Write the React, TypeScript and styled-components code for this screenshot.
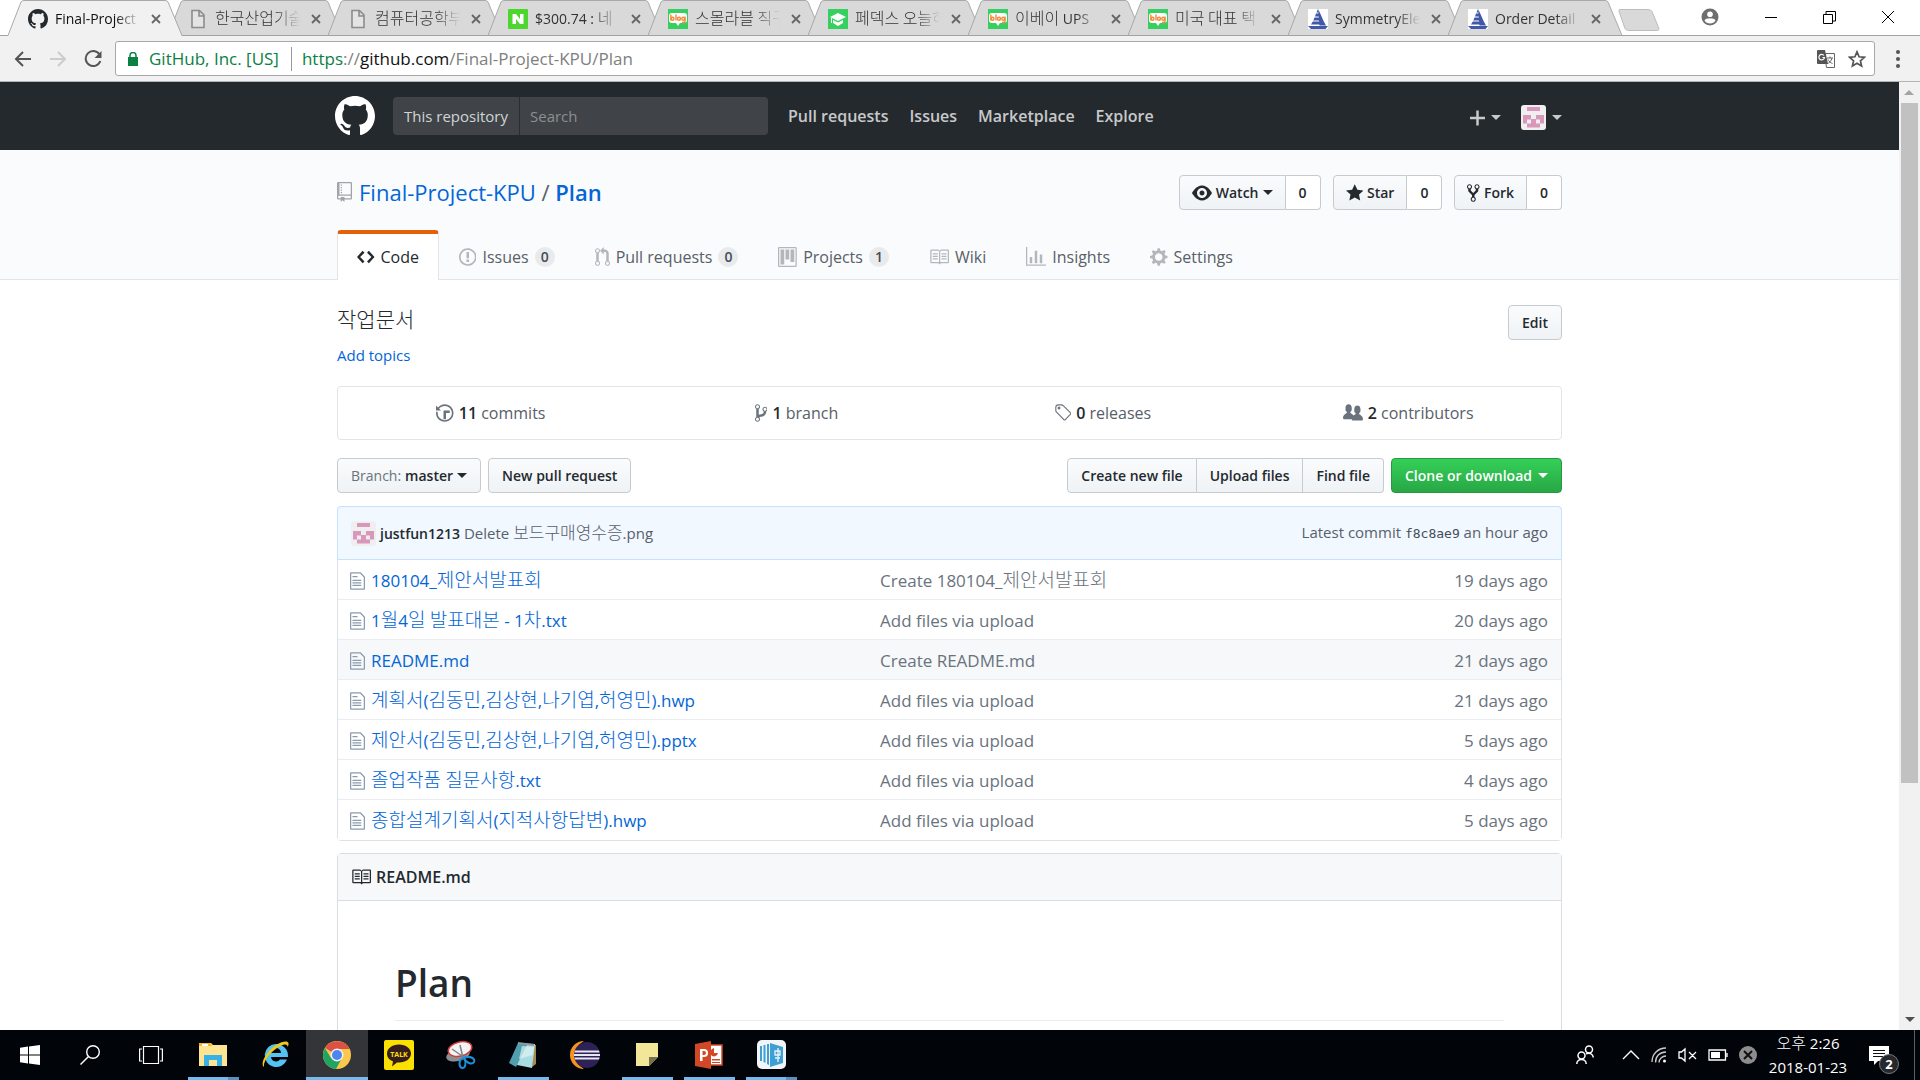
import React from "react";
import styled, { createGlobalStyle, css } from "styled-components";

const sans = `"Open Sans", "Noto Sans CJK KR", sans-serif`;

const GlobalStyle = createGlobalStyle`
  *, *::before, *::after { box-sizing: border-box; }
  body { margin: 0; background: #fff; color: #24292e; font: 16px/24px ${sans}; overflow: hidden; }
  button, input { font-family: inherit; margin: 0; }
  a { color: inherit; text-decoration: none; }
  svg { display: block; flex: none; }
  h1, h2, h3, p, ul { margin: 0; padding: 0; }
`;

/* ---------- text ---------- */

const Ko = styled.span<{ $size: number }>`
  font-family: "Noto Sans CJK KR", sans-serif;
  font-size: ${(p) => p.$size}px;
  font-weight: 300;
  line-height: 1;
`;

/* Sets the Hangul runs of a string in their own size. */
function Mixed({ text, size }: { text: string; size: number }) {
  return (
    <>
      {text.split(/([\uac00-\ud7a3]+)/).map((part, i) =>
        i % 2 ? <Ko key={i} $size={size}>{part}</Ko> : part
      )}
    </>
  );
}

/* ---------- octicons ---------- */

const octicons: Record<string, [number, string]> = {
  mark: [16, "M8 0C3.58 0 0 3.58 0 8c0 3.54 2.29 6.53 5.47 7.59.4.07.55-.17.55-.38 0-.19-.01-.82-.01-1.49-2.01.37-2.53-.49-2.69-.94-.09-.23-.48-.94-.82-1.13-.28-.15-.68-.52-.01-.53.63-.01 1.08.58 1.23.82.72 1.21 1.87.87 2.33.66.07-.52.28-.87.51-1.07-1.78-.2-3.64-.89-3.64-3.95 0-.87.31-1.59.82-2.15-.08-.2-.36-1.02.08-2.12 0 0 .67-.21 2.2.82.64-.18 1.32-.27 2-.27.68 0 1.36.09 2 .27 1.53-1.04 2.2-.82 2.2-.82.44 1.1.16 1.92.08 2.12.51.56.82 1.27.82 2.15 0 3.07-1.87 3.75-3.65 3.95.29.25.54.73.54 1.48 0 1.07-.01 1.93-.01 2.2 0 .21.15.46.55.38A8.013 8.013 0 0 0 16 8c0-4.42-3.58-8-8-8z"],
  repo: [12, "M4 9H3V8h1v1zm0-3H3v1h1V6zm0-2H3v1h1V4zm0-2H3v1h1V2zm8-1v12c0 .55-.45 1-1 1H6v2l-1.5-1.5L3 16v-2H1c-.55 0-1-.45-1-1V1c0-.55.45-1 1-1h10c.55 0 1 .45 1 1zm-1 10H1v2h2v-1h3v1h5v-2zm0-10H2v9h9V1z"],
  eye: [16, "M8.06 2C3 2 0 8 0 8s3 6 8.06 6C13 14 16 8 16 8s-3-6-7.94-6zM8 12c-2.2 0-4-1.78-4-4 0-2.2 1.8-4 4-4 2.22 0 4 1.8 4 4 0 2.22-1.78 4-4 4zm2-4c0 1.11-.89 2-2 2-1.11 0-2-.89-2-2 0-1.11.89-2 2-2 1.11 0 2 .89 2 2z"],
  star: [14, "M14 6l-4.9-.64L7 1 4.9 5.36 0 6l3.6 3.26L2.67 14 7 11.67 11.33 14l-.93-4.74z"],
  fork: [10, "M8 1a1.993 1.993 0 0 0-1 3.72V6L5 8 3 6V4.72A1.993 1.993 0 0 0 2 1a1.993 1.993 0 0 0-1 3.72V6.5l3 3v1.78A1.993 1.993 0 0 0 5 15a1.993 1.993 0 0 0 1-3.72V9.5l3-3V4.72A1.993 1.993 0 0 0 8 1zM2 4.2C1.34 4.2.8 3.65.8 3c0-.65.55-1.2 1.2-1.2.65 0 1.2.55 1.2 1.2 0 .65-.55 1.2-1.2 1.2zm3 10c-.66 0-1.2-.55-1.2-1.2 0-.65.55-1.2 1.2-1.2.65 0 1.2.55 1.2 1.2 0 .65-.55 1.2-1.2 1.2zm3-10c-.66 0-1.2-.55-1.2-1.2 0-.65.55-1.2 1.2-1.2.65 0 1.2.55 1.2 1.2 0 .65-.55 1.2-1.2 1.2z"],
  code: [14, "M9.5 3L8 4.5 11.5 8 8 11.5 9.5 13 14 8 9.5 3zm-5 0L0 8l4.5 5L6 11.5 2.5 8 6 4.5 4.5 3z"],
  issue: [14, "M7 2.3c3.14 0 5.7 2.56 5.7 5.7s-2.56 5.7-5.7 5.7A5.71 5.71 0 0 1 1.3 8c0-3.14 2.56-5.7 5.7-5.7zM7 1C3.14 1 0 4.14 0 8s3.14 7 7 7 7-3.14 7-7-3.14-7-7-7zm1 3H6v5h2V4zm0 6H6v2h2v-2z"],
  pull: [12, "M11 11.28V5c-.03-.78-.34-1.47-.94-2.06C9.46 2.35 8.78 2.03 8 2H7V0L4 3l3 3V4h1c.27.02.48.11.69.31.21.2.3.42.31.69v6.28A1.993 1.993 0 0 0 10 15a1.993 1.993 0 0 0 1-3.72zm-1 2.92c-.66 0-1.2-.55-1.2-1.2 0-.65.55-1.2 1.2-1.2.65 0 1.2.55 1.2 1.2 0 .65-.55 1.2-1.2 1.2zM4 3c0-1.11-.89-2-2-2a1.993 1.993 0 0 0-1 3.72v6.56A1.993 1.993 0 0 0 2 15a1.993 1.993 0 0 0 1-3.72V4.72c.59-.34 1-.98 1-1.72zm-.8 10c0 .66-.55 1.2-1.2 1.2-.65 0-1.2-.55-1.2-1.2 0-.65.55-1.2 1.2-1.2.65 0 1.2.55 1.2 1.2zM2 4.2C1.34 4.2.8 3.65.8 3c0-.65.55-1.2 1.2-1.2.65 0 1.2.55 1.2 1.2 0 .65-.55 1.2-1.2 1.2z"],
  project: [15, "M10 12h3V2h-3v10zm-4-2h3V2H6v8zm-4 4h3V2H2v12zm-1 1h13V1H1v14zM14 0H1a1 1 0 0 0-1 1v14a1 1 0 0 0 1 1h13a1 1 0 0 0 1-1V1a1 1 0 0 0-1-1z"],
  book: [16, "M3 5h4v1H3V5zm0 3h4V7H3v1zm0 2h4V9H3v1zm11-5h-4v1h4V5zm0 2h-4v1h4V7zm0 2h-4v1h4V9zm2-6v9c0 .55-.45 1-1 1H9.5l-1 1-1-1H2c-.55 0-1-.45-1-1V3c0-.55.45-1 1-1h5.5l1 1 1-1H15c.55 0 1 .45 1 1zm-8 .5L7.5 3H2v9h6V3.5zm7-.5H9.5l-.5.5V12h6V3z"],
  graph: [16, "M16 14v1H0V0h1v14h15zM5 13H3V8h2v5zm4 0H7V3h2v10zm4 0h-2V6h2v7z"],
  gear: [14, "M14 8.77v-1.6l-1.94-.64-.45-1.09.88-1.84-1.13-1.13-1.81.91-1.09-.45-.69-1.92h-1.6l-.63 1.94-1.11.45-1.84-.88-1.13 1.13.91 1.81-.45 1.09L0 7.23v1.59l1.94.64.45 1.09-.88 1.84 1.13 1.13 1.81-.91 1.09.45.69 1.92h1.59l.63-1.94 1.11-.45 1.84.88 1.13-1.13-.92-1.81.47-1.09L14 8.75v.02zM7 11c-1.66 0-3-1.34-3-3s1.34-3 3-3 3 1.34 3 3-1.34 3-3 3z"],
  history: [14, "M8 13H6V6h5v2H8v5zM7 1C4.81 1 2.87 2.02 1.59 3.59L0 2v4h4L2.5 4.5C3.55 3.17 5.17 2.3 7 2.3c3.14 0 5.7 2.56 5.7 5.7s-2.56 5.7-5.7 5.7A5.71 5.71 0 0 1 1.3 8c0-.34.03-.67.09-1H.08C.03 7.33 0 7.66 0 8c0 3.86 3.14 7 7 7s7-3.14 7-7-3.14-7-7-7z"],
  branch: [10, "M10 5c0-1.11-.89-2-2-2a1.993 1.993 0 0 0-1 3.72v.3c-.02.52-.23.98-.63 1.38-.4.4-.86.61-1.38.63-.83.02-1.48.16-2 .45V4.72a1.993 1.993 0 0 0-1-3.72C.88 1 0 1.89 0 3a2 2 0 0 0 1 1.72v6.56c-.59.35-1 .99-1 1.72 0 1.11.89 2 2 2 1.11 0 2-.89 2-2 0-.53-.2-1-.53-1.36.09-.06.48-.41.59-.47.25-.11.56-.17.94-.17 1.05-.05 1.95-.45 2.75-1.25S8.95 7.77 9 6.73h-.02C9.59 6.37 10 5.73 10 5zM2 1.8c.66 0 1.2.55 1.2 1.2 0 .65-.55 1.2-1.2 1.2C1.35 4.2.8 3.65.8 3c0-.65.55-1.2 1.2-1.2zm0 12.41c-.66 0-1.2-.55-1.2-1.2 0-.65.55-1.2 1.2-1.2.65 0 1.2.55 1.2 1.2 0 .65-.55 1.2-1.2 1.2zm6-8c-.66 0-1.2-.55-1.2-1.2 0-.65.55-1.2 1.2-1.2.65 0 1.2.55 1.2 1.2 0 .65-.55 1.2-1.2 1.2z"],
  tag: [14, "M7.685 1.72a2.49 2.49 0 0 0-1.76-.726H3.48A2.5 2.5 0 0 0 .994 3.48v2.456c0 .656.269 1.292.726 1.76l6.024 6.024a.99.99 0 0 0 1.402 0l4.563-4.563a.99.99 0 0 0 0-1.402L7.685 1.72zM2.366 7.048A1.54 1.54 0 0 1 1.9 5.925V3.48c0-.874.716-1.58 1.58-1.58h2.456c.418 0 .825.159 1.123.467l6.104 6.094-4.702 4.702-6.094-6.114zm.626-4.066h1.989v1.989H2.982V2.982h.01z"],
  people: [16, "M16 12.999c0 .439-.45 1-1 1H7.995c-.539 0-.994-.447-.995-.999H1c-.54 0-1-.561-1-1 0-2.634 3-4 3-4s.229-.409 0-1c-.841-.621-1.058-.59-1-3 .058-2.419 1.367-3 2.5-3s2.442.58 2.5 3c.058 2.41-.159 2.379-1 3-.229.59 0 1 0 1s1.549.711 2.42 2.088C9.196 9.369 10 8.999 10 8.999s.229-.409 0-1c-.841-.62-1.058-.59-1-3 .058-2.419 1.367-3 2.5-3s2.437.581 2.495 3c.059 2.41-.158 2.38-1 3-.229.59 0 1 0 1s3.005 1.366 3.005 4"],
  file: [12, "M6 5H2V4h4v1zM2 8h7V7H2v1zm0 2h7V9H2v1zm0 2h7v-1H2v1zm10-7.5V14c0 .55-.45 1-1 1H1c-.55 0-1-.45-1-1V2c0-.55.45-1 1-1h7.5L12 4.5zM11 5L8 2H1v12h10V5z"],
  plus: [12, "M12 9H7v5H5V9H0V7h5V2h2v5h5z"],
};

function Octicon({ name, size = 20 }: { name: string; size?: number }) {
  const [w, d] = octicons[name];
  return (
    <svg viewBox={`0 0 ${w} 16`} width={(w * size) / 16} height={size} fill="currentColor" aria-hidden="true">
      <path fillRule="evenodd" d={d} />
    </svg>
  );
}

const Caret = styled.i`
  flex: none;
  border: 5px solid transparent;
  border-top-color: currentColor;
  border-bottom: 0;
`;

function Avatar() {
  return (
    <svg width="25" height="25" viewBox="0 0 25 25" aria-hidden="true">
      <rect width="25" height="25" rx="3" fill="#f0eff0" />
      <path
        fill="#d997bb"
        fillRule="evenodd"
        d="M6 2h13v4H6zM2 10h8v4h5v-4h8v8.500h-4v4H6v-4H2zM6 14.500v4h4v-4zM15 14.500v4h4v-4z"
      />
    </svg>
  );
}

/* ---------- browser frame ---------- */

const Screen = styled.div`
  display: flex;
  flex-direction: column;
  height: 100vh;
`;

const TabStrip = styled.div`
  display: flex;
  height: 36px;
  flex: none;
  background: #fff;
  border-bottom: 1px solid #a2a2a2;
`;

const TabList = styled.div`
  display: flex;
  flex: 0 1 1608px;
  min-width: 0;
  padding-left: 8px;
`;

const Tab = styled.div<{ $active?: boolean }>`
  position: relative;
  display: flex;
  align-items: center;
  flex: 0 1 160px;
  min-width: 0;
  height: 36px;
  padding: 2px 2px 0 20px;
  z-index: ${(p) => (p.$active ? 2 : 1)};
`;

const TabShape = styled.svg`
  position: absolute;
  left: 0;
  top: 0;
  z-index: -1;
`;

const TabTitle = styled.a<{ $active?: boolean }>`
  flex: 1;
  min-width: 0;
  margin: 0 4px 0 7px;
  white-space: nowrap;
  font-size: 14px;
  line-height: 26px;
  color: ${(p) => (p.$active ? "#111" : "#333")};
  mask-image: linear-gradient(90deg, #000 70%, transparent 98%);
`;

const PlainButton = styled.button<{ $w?: number }>`
  display: flex;
  align-items: center;
  justify-content: center;
  flex: none;
  width: ${(p) => (p.$w ? `${p.$w}px` : "auto")};
  padding: 0;
  border: 0;
  background: none;
  color: inherit;
`;

const WindowControls = styled.div`
  display: flex;
  flex: none;
  height: 34px;
  margin-left: auto;
`;

const NewTab = styled(PlainButton)`
  height: 40px;
  margin-left: 10px;
`;

const Toolbar = styled.div`
  display: flex;
  align-items: center;
  flex: none;
  height: 46px;
  padding: 0 12px 0 6px;
  background: #f1f1f1;
  border-bottom: 1px solid #b4b4b4;
  color: #555;
`;

const Omnibox = styled.div`
  display: flex;
  align-items: center;
  flex: 1;
  min-width: 0;
  height: 35px;
  margin: 0 13px 0 5px;
  padding: 0 8px 0 12px;
  border: 1px solid #a8a8a8;
  border-radius: 3px;
  background: #fff;
  font-size: 17px;
  line-height: 24px;
  white-space: nowrap;
`;

const Secure = styled.span`
  margin-left: 11px;
  padding-right: 12px;
  border-right: 1px solid #999;
  color: #0b8043;
`;

const Url = styled.span`
  flex: 1;
  padding-left: 10px;
  color: #808080;
`;

const Scheme = styled.span` color: #0b8043; `;
const Domain = styled.span` color: #111; `;

const OmniActions = styled.div`
  display: flex;
  gap: 13px;
`;

/* ---------- page ---------- */

const Viewport = styled.div`
  display: flex;
  flex: 1;
  min-height: 0;
`;

const Page = styled.div`
  flex: 1;
  min-width: 0;
  overflow: hidden;
`;

const Scrollbar = styled.div`
  display: flex;
  flex-direction: column;
  align-items: center;
  justify-content: space-between;
  flex: none;
  width: 21px;
  background: #f1f1f1;
`;

const ScrollTrack = styled.div`
  flex: 1;
  width: 17px;
`;

const ScrollThumb = styled.div`
  height: 75%;
  background: #c1c1c1;
`;

const ScrollArrow = styled.button<{ $down?: boolean }>`
  display: flex;
  align-items: center;
  justify-content: center;
  width: 21px;
  height: 21px;
  padding: 0;
  border: 0;
  background: none;
  color: ${(p) => (p.$down ? "#505050" : "#a3a3a3")};
  transform: ${(p) => (p.$down ? "none" : "rotate(180deg)")};
`;

const Container = styled.div`
  width: 100%;
  max-width: 1225px;
  margin: 0 auto;
`;

const SiteHeader = styled.header`
  background: #24292e;
  color: rgba(255, 255, 255, 0.75);
`;

const HeaderRow = styled(Container)`
  display: flex;
  align-items: center;
  height: 68px;
`;

const Logo = styled.a`
  margin-left: -2px;
  color: #fff;
`;

const SearchForm = styled.form`
  display: flex;
  align-items: center;
  width: 375px;
  height: 38px;
  margin: 0 20px 0 18px;
  border-radius: 4px;
  background: #404448;
  font-size: 15px;
  line-height: 38px;
`;

const SearchScope = styled.label`
  padding: 0 11px;
  border-right: 1px solid #282e34;
  color: #d2d4d5;
  white-space: nowrap;
`;

const SearchInput = styled.input`
  flex: 1;
  min-width: 0;
  height: 38px;
  padding: 0 10px;
  border: 0;
  background: none;
  color: #fff;
  font-size: 15px;
  &::placeholder { color: #8c8f91; opacity: 1; }
`;

const SiteNav = styled.nav`
  display: flex;
  gap: 21px;
  font-weight: 600;
`;

const HeaderActions = styled.div`
  display: flex;
  gap: 20px;
  margin-left: auto;
  padding-top: 3px;
  button { gap: 6px; }
`;

const RepoHead = styled.div`
  background: #fafbfc;
  border-bottom: 1px solid #e1e4e8;
`;

const RepoTitleRow = styled(Container)`
  display: flex;
  align-items: center;
  height: 80px;
  padding-top: 5px;
`;

const RepoTitle = styled.h1`
  display: flex;
  align-items: center;
  gap: 7px;
  padding-bottom: 2px;
  color: #586069;
  font-size: 22px;
  font-weight: 400;
  line-height: 32px;
  svg { color: #a0a4a9; }
  a { color: #0366d6; }
  strong { font-weight: 600; }
`;

const SocialList = styled.ul`
  display: flex;
  gap: 12px;
  margin-left: auto;
  list-style: none;
  li { display: flex; }
`;

const buttonBase = css`
  display: flex;
  align-items: center;
  justify-content: center;
  height: 35px;
  padding: 0 13px;
  border: 1px solid #c8cbce;
  border-radius: 4px;
  background: linear-gradient(#fafbfc, #eff3f6);
  color: #24292e;
  font-size: 14px;
  font-weight: 600;
  line-height: 25px;
  white-space: nowrap;
`;

const Button = styled.button`
  ${buttonBase}
  gap: 4px;
`;

const SocialButton = styled(Button)`
  padding: 0 12px;
  border-radius: 4px 0 0 4px;
`;

const SocialCount = styled.a`
  ${buttonBase}
  min-width: 35px;
  padding: 0 12px;
  border-left: 0;
  border-radius: 0 4px 4px 0;
  background: #fff;
`;

const GreenButton = styled(Button)`
  gap: 6px;
  border-color: #2a9641;
  background: linear-gradient(#34d058, #28a745);
  color: #fff;
`;

const ButtonGroup = styled.div`
  display: flex;
  margin-left: auto;
  button { border-radius: 0; padding: 0 13px; }
  button + button { border-left: 0; }
  button:first-child { border-radius: 4px 0 0 4px; }
  button:last-child { border-radius: 0 4px 4px 0; }
`;

const RepoTabs = styled.nav`
  display: flex;
  width: 100%;
  max-width: 1225px;
  height: 50px;
  margin: 0 auto -1px;
`;

const RepoTab = styled.a<{ $active?: boolean }>`
  display: flex;
  align-items: center;
  gap: 6px;
  padding: 0 19px;
  border: 1px solid transparent;
  border-top: 4px solid transparent;
  border-bottom: 0;
  border-radius: 4px 4px 0 0;
  color: #586069;
  white-space: nowrap;
  svg { color: #b4b7ba; }
  ${(p) =>
    p.$active &&
    css`
      border-color: #e36209 #e1e4e8 transparent;
      background: #fff;
      color: #24292e;
      svg { color: #24292e; }
    `}
`;

const Counter = styled.span`
  min-width: 20px;
  padding: 0 6px;
  border-radius: 20px;
  background: #e8eaec;
  color: #444d56;
  font-size: 14px;
  font-weight: 600;
  line-height: 20px;
  text-align: center;
`;

const Main = styled(Container)`
  padding-top: 25px;
`;

const DescriptionRow = styled.div`
  display: flex;
  align-items: flex-start;
  justify-content: space-between;
`;

const About = styled.div`
  padding-top: 2px;
`;

const Description = styled.p`
  height: 36px;
  line-height: 28px;
`;

const TopicsLink = styled.a`
  display: block;
  color: #0366d6;
  font-size: 15px;
  line-height: 24px;
`;

const Stats = styled.ul`
  display: flex;
  height: 54px;
  margin: 19px 0 18px;
  border: 1px solid #e1e4e8;
  border-radius: 4px;
  list-style: none;
  li { flex: 1; display: flex; }
`;

const Stat = styled.a`
  display: flex;
  align-items: center;
  justify-content: center;
  flex: 1;
  gap: 5px;
  color: #586069;
  svg { color: #6a737d; }
  strong { color: #24292e; font-weight: 600; }
`;

const FileNav = styled.div`
  display: flex;
  gap: 7px;
  margin-bottom: 13px;
`;

const BranchLabel = styled.span`
  color: #6a737d;
  font-weight: 400;
`;

const FilesBox = styled.section`
  border: 1px solid #dfe2e5;
  border-radius: 4px;
`;

const CommitTease = styled.div`
  display: flex;
  align-items: center;
  gap: 4px;
  height: 54px;
  margin: -1px -1px 0;
  padding: 0 13px;
  border: 1px solid #c8e1ff;
  border-radius: 4px 4px 0 0;
  background: #f1f8ff;
  color: #586069;
  font-size: 15px;
  a { color: #24292e; font-size: 14px; font-weight: 600; }
`;

const CommitMeta = styled.span`
  margin-left: auto;
`;

const Sha = styled.code`
  color: #444d56;
  font-family: "DejaVu Sans Mono", monospace;
  font-size: 13px;
`;

const FileTable = styled.table`
  width: 100%;
  border-collapse: separate;
  border-spacing: 0;
  table-layout: fixed;
`;

const FileRow = styled.tr<{ $shaded?: boolean }>`
  background: ${(p) => (p.$shaded ? "#f6f8fa" : "#fff")};
  &:not(:last-child) td { border-bottom: 1px solid #eaecef; }
`;

const Cell = styled.td<{ $w?: string; $right?: boolean }>`
  width: ${(p) => p.$w || "auto"};
  height: 40px;
  padding: 2px 13px 0 0;
  color: #6a737d;
  text-align: ${(p) => (p.$right ? "right" : "left")};
  white-space: nowrap;
  font-size: 17px;
  line-height: 24px;
`;

const FileName = styled.div`
  display: flex;
  align-items: center;
  gap: 6px;
  padding-left: 12px;
  svg { color: #8a9bb0; }
  a { color: #0366d6; }
`;

const Readme = styled.article`
  margin-top: 12px;
  border: 1px solid #d9dce0;
  border-radius: 4px;
`;

const ReadmeHead = styled.h3`
  display: flex;
  align-items: center;
  gap: 5px;
  height: 47px;
  padding: 0 13px;
  border-bottom: 1px solid #d9dce0;
  background: #f6f8fa;
  font-size: 16px;
  font-weight: 600;
`;

const ReadmeBody = styled.div`
  padding: 57px;
  height: 300px;
  h1 {
    padding-bottom: 12px;
    border-bottom: 1px solid #eaecef;
    font-size: 37px;
    font-weight: 600;
    line-height: 50px;
  }
`;

/* ---------- taskbar ---------- */

const Taskbar = styled.footer`
  display: flex;
  flex: none;
  height: 50px;
  padding-right: 5px;
  background: #010409;
  color: #fff;
`;

const TaskButton = styled.button<{ $w: number; $running?: boolean; $stacked?: boolean; $current?: boolean }>`
  display: flex;
  align-items: center;
  justify-content: center;
  flex: none;
  width: ${(p) => p.$w}px;
  height: 50px;
  padding: 0;
  border: 0;
  background: ${(p) => (p.$current ? "#333539" : "none")};
  ${(p) =>
    p.$running &&
    css`
      background: linear-gradient(90deg, #76b9ed ${p.$stacked ? "40px" : "100%"}, #5a8fbf 0)
        ${p.$current ? "0 100% / 100%" : "6px 100% / 51px"} 3px no-repeat ${p.$current ? "#333539" : "transparent"};
    `}
`;

const Tray = styled.div`
  display: flex;
  align-items: center;
  margin-left: auto;
  border-right: 1px solid #5c5f63;
`;

const TrayIcons = styled.div`
  display: flex;
  align-items: center;
  gap: 11px;
  margin: 0 11px 0 28px;
`;

const Clock = styled.time`
  width: 80px;
  font-size: 15px;
  line-height: 24px;
  text-align: center;
  white-space: nowrap;
`;

const Notifications = styled(PlainButton)`
  position: relative;
  width: 20px;
  height: 50px;
  margin: 0 25px 0 21px;
  color: #fff;
`;

const NotificationBadge = styled.span`
  position: absolute;
  left: 10px;
  top: 24px;
  width: 20px;
  height: 20px;
  border: 1px solid #77797c;
  border-radius: 50%;
  background: #26282b;
  font-size: 13px;
  font-weight: 700;
  line-height: 18px;
`;

/* ---------- drawings ---------- */

const PageIcon = () => (
  <svg width="20" height="20" viewBox="0 0 20 20" fill="#e4e4e4" stroke="#8c8c8c" strokeWidth="1.6">
    <path d="M4 1.5h7.5L16 6v12.5H4zM11 1.5V7h5" />
  </svg>
);
const BlogIcon = () => (
  <svg width="20" height="20" viewBox="0 0 20 20">
    <rect width="20" height="20" fill="#35d05f" />
    <path d="M4 4h12a3 3 0 0 1 3 3v4a3 3 0 0 1-3 3h-4l-2 3-2-3H4a3 3 0 0 1-3-3V7a3 3 0 0 1 3-3z" fill="#fff" />
    <g fill="none" stroke="#f58a3c" strokeWidth="1.4">
      <path d="M2.9 5.5v6M8 5.5v6M17 7.500v6h-3" />
      <circle cx="4.500" cy="9.700" r="1.500" /><circle cx="11" cy="9.700" r="1.500" /><circle cx="15.300" cy="9.700" r="1.500" />
    </g>
  </svg>
);
const NaverIcon = () => (
  <svg width="20" height="20" viewBox="0 0 20 20">
    <rect width="20" height="20" rx="1" fill="#4cd62e" />
    <path d="M4.500 5H8l4 5V5h3.500v10H12L8 10v5H4.500z" fill="#fff" />
  </svg>
);
const CapIcon = () => (
  <svg width="20" height="20" viewBox="0 0 20 20">
    <rect width="20" height="20" fill="#35d05f" />
    <path d="M10 4l8 4-8 4-8-4zM5 11l5 2.500L15 11v3l-5 3-5-3zM3 9h1v5H3z" fill="#fff" />
  </svg>
);
const SailIcon = () => (
  <svg width="20" height="20" viewBox="0 0 20 20">
    <rect width="20" height="20" fill="#fff" />
    <path d="M10 0C13 5 14.500 11 18 16.500h-6.500z" fill="#3f59a8" />
    <path d="M10 0v3.500H8.500zM8 4.500h3v3H7zM6.500 8.500H12v3H5.300zM4.800 12.500H13v3H3zM0 17h20l-2.500 3H3z" fill="#3f59a8" />
  </svg>
);

const tabs: { title: string; icon: React.ReactNode }[] = [
  { title: "Final-Project", icon: <Octicon name="mark" /> },
  { title: "한국산업기술", icon: <PageIcon /> },
  { title: "컴퓨터공학부", icon: <PageIcon /> },
  { title: "$300.74 : 네", icon: <NaverIcon /> },
  { title: "스몰라블 직구", icon: <BlogIcon /> },
  { title: "페덱스 오늘하", icon: <CapIcon /> },
  { title: "이베이 UPS", icon: <BlogIcon /> },
  { title: "미국 대표 택", icon: <BlogIcon /> },
  { title: "SymmetryEle", icon: <SailIcon /> },
  { title: "Order Detail", icon: <SailIcon /> },
];

const repoTabs: [string, string, string?][] = [
  ["code", "Code"],
  ["issue", "Issues", "0"],
  ["pull", "Pull requests", "0"],
  ["project", "Projects", "1"],
  ["book", "Wiki"],
  ["graph", "Insights"],
  ["gear", "Settings"],
];

const files: [string, string, string][] = [
  ["180104_제안서발표회", "Create 180104_제안서발표회", "19 days ago"],
  ["1월4일 발표대본 - 1차.txt", "Add files via upload", "20 days ago"],
  ["README.md", "Create README.md", "21 days ago"],
  ["계획서(김동민,김상현,나기엽,허영민).hwp", "Add files via upload", "21 days ago"],
  ["제안서(김동민,김상현,나기엽,허영민).pptx", "Add files via upload", "5 days ago"],
  ["졸업작품 질문사항.txt", "Add files via upload", "4 days ago"],
  ["종합설계기획서(지적사항답변).hwp", "Add files via upload", "5 days ago"],
];

const TaskIcon = ({ children }: { children: React.ReactNode }) => (
  <svg width="30" height="30" viewBox="0 0 30 30" aria-hidden="true">{children}</svg>
);

const taskIcons: { name: string; running?: boolean; stacked?: boolean; current?: boolean; art: React.ReactNode }[] = [
  {
    name: "File Explorer", running: true, stacked: true,
    art: <><path d="M1 3h12l2 2h14v21H1z" fill="#ffe592" /><path d="M1 3h12l1 3H1z" fill="#f5b91f" /><path d="M4 4h6v2H4z" fill="#fff" /><path d="M6 15h18v11h-5v-6h-8v6H6z" fill="#37b1e6" /></>,
  },
  {
    name: "Internet Explorer",
    art: <><path d="M16 4a11.500 11.500 0 1 0 11 15.500h-7a5 5 0 0 1-9-2.500h17A12 12 0 0 0 16 4zm-5 9a5 5 0 0 1 10 0z" fill="#55c3f2" fillRule="evenodd" /><path d="M4 27C-1 23 8 10 17 4.500 22 1.500 28 0 28.500 3.500c.2 1-.3 2.500-.8 3.500 0-3-3-3.500-8-.5C11 11 3 21 4 27z" fill="#f5c71a" /></>,
  },
  {
    name: "Chrome", running: true, current: true,
    art: <><circle cx="15" cy="15" r="14" fill="#fcc84c" /><path d="M15 15L3 8A14 14 0 0 1 27.500 9H15z" fill="#dd5144" /><path d="M2.900 8A14 14 0 0 0 14 29l6-11-5 3-6-3z" fill="#1fa463" /><circle cx="15" cy="15" r="6.500" fill="#f1f1f1" /><circle cx="15" cy="15" r="5" fill="#4d87ee" /></>,
  },
  {
    name: "KakaoTalk",
    art: <><rect width="30" height="30" rx="2" fill="#fbe100" /><path d="M15 4.500c7 0 12 4 12 9s-5 9-12 9h-2l-5 4 1-5c-4-2-6-4-6-8 0-5 5-9 12-9z" fill="#371d1e" /><text x="15" y="17" fill="#fbe100" fontFamily="Open Sans" fontWeight="700" fontSize="7" textAnchor="middle">TALK</text></>,
  },
  {
    name: "Snipping Tool",
    art: <><ellipse cx="12" cy="15" rx="12" ry="6" fill="#8b8f93" transform="rotate(-14 12 15)" /><ellipse cx="14" cy="9" rx="12" ry="7" fill="#f4f4f4" stroke="#d43b35" strokeWidth="1.500" transform="rotate(-14 14 9)" /><path d="M6 9l13 9M14 5l3 13" stroke="#7d8388" strokeWidth="1.500" /><path d="M17 18c-5 2-4 9-1 10s5-5 2-10c2 5 8 7 10 4s-4-7-10-4z" fill="none" stroke="#1d8fd8" strokeWidth="2" /></>,
  },
  {
    name: "Notepad", running: true,
    art: <><path d="M25 5l3 0v19l-4 3z" fill="#a88a50" /><path d="M10 3l17 1-3 24-15-3z" fill="#a9dbe2" /><path d="M10 3L1 23l7 4 12-24z" fill="#4f9fae" /><path d="M14 6l12 1-1 8-14 4z" fill="#dff3f5" opacity=".7" /><path d="M10 2l16 2v2L10 4z" fill="#8f9a9e" /></>,
  },
  {
    name: "Eclipse",
    art: <><path d="M14 1A14 14 0 0 0 14 29 16 16 0 0 1 14 1z" fill="#f7941e" /><circle cx="17" cy="15" r="13" fill="#2c2255" /><path d="M5 10.500h24l.6 2H4.400zM4 14h26v2H4zM4.400 17.500h25.200l-.6 2H5z" fill="#e8e6f2" /></>,
  },
  {
    name: "Sticky Notes", running: true,
    art: <><path d="M4 3h22v14l-9 9H4z" fill="#f2e698" /><path d="M17 17h9l-9 9z" fill="#77724c" /></>,
  },
  {
    name: "PowerPoint", running: true,
    art: <><path d="M16 5h12v20H16z" fill="#fff" stroke="#d24726" strokeWidth="1.500" /><path d="M18 9a4 4 0 1 0 6 4h-4V8zM18 19h8v1.500h-8zM18 22h8v1h-8z" fill="#d24726" /><path d="M1 4l16-3v28L1 26z" fill="#d24726" /><path d="M6 21V9h4a4 4 0 0 1 0 8H8.500v4zm2.500-6H10a2 2 0 0 0 0-4H8.500z" fill="#fff" fillRule="evenodd" /></>,
  },
  {
    name: "Remote Desktop", running: true, stacked: true,
    art: <><rect x="1" width="29" height="29" rx="5" fill="#f2f5f7" /><path d="M4 6h2v15H4zM7.500 5h2v18l-2-1zM11 4h2v21l-2-1z" fill="#3e9fd4" /><path d="M14 3l13 4v16l-13 4z" fill="#3e9fd4" /><path d="M22 8v14M19 11h5v4h-5zM19 18h5" stroke="#e8f4fa" fill="none" strokeWidth="1.300" /></>,
  },
];

function BrowserTab({ title, icon, active }: { title: string; icon: React.ReactNode; active?: boolean }) {
  return (
    <Tab $active={active}>
      <TabShape width="176" height="36" viewBox="0 0 176 36" aria-hidden="true">
        <path d="M0 36L13 2Q14 .5 16 .5H157Q159 .5 160 2L174 36z" fill={active ? "#f1f1f1" : "#d9d9d9"} stroke="none" />
        <path d="M0 35.500L13 2Q14 .5 16 .5H157Q159 .5 160 2L174 35.500" fill="none" stroke="#a9a9a9" />
        {!active && <path d="M0 35.500H176" stroke="#a2a2a2" />}
      </TabShape>
      {icon}
      <TabTitle href="#" $active={active}><Mixed text={title} size={16} /></TabTitle>
      <PlainButton $w={20} aria-label="Close tab">
        <svg width="10" height="10" viewBox="0 0 10 10" stroke="#666" strokeWidth="1.800"><path d="M1 1l8 8M9 1L1 9" /></svg>
      </PlainButton>
    </Tab>
  );
}

export default function App() {
  return (
    <Screen>
      <GlobalStyle />
      <TabStrip>
        <TabList>
          {tabs.map((t, i) => (
            <BrowserTab key={i} title={t.title} icon={t.icon} active={i === 0} />
          ))}
        </TabList>
        <NewTab aria-label="New tab">
          <svg width="44" height="22" viewBox="0 0 44 22"><path d="M2 .5H30q3 0 4 2l7 17q0 2-2 2H11q-3 0-4-2L1 2.500q-.5-2 1-2z" fill="#d9d9d9" stroke="#bdbdbd" /></svg>
        </NewTab>
        <WindowControls>
          <PlainButton $w={60} aria-label="Profile">
            <svg width="18" height="18" viewBox="0 0 18 18"><circle cx="9" cy="9" r="8.500" fill="#6e6e6e" /><circle cx="9" cy="6.200" r="2.800" fill="#fff" /><path d="M3.500 12.500c1-3 10-3 11 0-2 4-9 4-11 0z" fill="#fff" /></svg>
          </PlainButton>
          <PlainButton $w={62} aria-label="Minimise">
            <svg width="12" height="12" viewBox="0 0 12 12" stroke="#000"><path d="M0 6.500h12" /></svg>
          </PlainButton>
          <PlainButton $w={54} aria-label="Restore">
            <svg width="13" height="13" viewBox="0 0 13 13" fill="none" stroke="#000"><path d="M.5 3.500h9v9h-9zM3 3V.5h9.500V10H10" /></svg>
          </PlainButton>
          <PlainButton $w={64} aria-label="Close">
            <svg width="12" height="12" viewBox="0 0 12 12" stroke="#000"><path d="M0 0l12 12M12 0L0 12" /></svg>
          </PlainButton>
        </WindowControls>
      </TabStrip>

      <Toolbar>
        <PlainButton $w={34} aria-label="Back">
          <svg width="18" height="18" viewBox="0 0 18 18" fill="none" stroke="#555" strokeWidth="2"><path d="M17 9H2M9 2L2 9l7 7" /></svg>
        </PlainButton>
        <PlainButton $w={36} aria-label="Forward">
          <svg width="18" height="18" viewBox="0 0 18 18" fill="none" stroke="#ccc" strokeWidth="2"><path d="M1 9h15M9 2l7 7-7 7" /></svg>
        </PlainButton>
        <PlainButton $w={34} aria-label="Reload">
          <svg width="18" height="18" viewBox="0 0 18 18" fill="none" stroke="#555" strokeWidth="2"><path d="M15.500 4.500A7.500 7.500 0 1 0 16.300 11" /><path d="M17.500 1v7h-7z" fill="#555" stroke="none" /></svg>
        </PlainButton>
        <Omnibox role="textbox" aria-label="Address">
          <svg width="10" height="14" viewBox="0 0 10 14" fill="#0b8043"><path d="M0 5h10v9H0z" /><path d="M2 6V3.500a3 3 0 0 1 6 0V6" fill="none" stroke="#0b8043" strokeWidth="1.500" /></svg>
          <Secure>GitHub, Inc. [US]</Secure>
          <Url><Scheme>https</Scheme>://<Domain>github.com</Domain>/Final-Project-KPU/Plan</Url>
          <OmniActions>
            <PlainButton aria-label="Translate">
              <svg width="18" height="18" viewBox="0 0 18 18"><path d="M7.500 3.500h10v14h-8z" fill="#fff" stroke="#666" /><path d="M10 8h6M13 6.500V8m2 0c-.5 3-3 5-4.500 5.500M11 9.500c1 2 3 3.500 4.500 4" stroke="#666" fill="none" /><path d="M1 0h7l3 14H1q-1 0-1-1V1q0-1 1-1z" fill="#555" /><path d="M7 5.500a2.800 2.800 0 1 0 .5 2H5.500" fill="none" stroke="#fff" strokeWidth="1.200" /></svg>
            </PlainButton>
            <PlainButton aria-label="Bookmark">
              <svg width="18" height="18" viewBox="0 0 18 18" fill="none" stroke="#555" strokeWidth="1.700"><path d="M9 1.800l2.100 5 5.300.5-4 3.500 1.200 5.200L9 13.200 4.400 16l1.200-5.200-4-3.500 5.300-.5z" /></svg>
            </PlainButton>
          </OmniActions>
        </Omnibox>
        <PlainButton $w={20} aria-label="Menu">
          <svg width="4" height="18" viewBox="0 0 4 18" fill="#555"><circle cx="2" cy="2" r="2" /><circle cx="2" cy="9" r="2" /><circle cx="2" cy="16" r="2" /></svg>
        </PlainButton>
      </Toolbar>

      <Viewport>
        <Page>
          <SiteHeader>
            <HeaderRow>
              <Logo href="#" aria-label="Homepage"><Octicon name="mark" size={40} /></Logo>
              <SearchForm>
                <SearchScope htmlFor="search">This repository</SearchScope>
                <SearchInput id="search" type="text" placeholder="Search" />
              </SearchForm>
              <SiteNav>
                <a href="#">Pull requests</a>
                <a href="#">Issues</a>
                <a href="#">Marketplace</a>
                <a href="#">Explore</a>
              </SiteNav>
              <HeaderActions>
                <PlainButton aria-label="Create new"><Octicon name="plus" /><Caret /></PlainButton>
                <PlainButton aria-label="Account"><Avatar /><Caret /></PlainButton>
              </HeaderActions>
            </HeaderRow>
          </SiteHeader>

          <RepoHead>
            <RepoTitleRow>
              <RepoTitle>
                <Octicon name="repo" />
                <span><a href="#">Final-Project-KPU</a> / <a href="#"><strong>Plan</strong></a></span>
              </RepoTitle>
              <SocialList>
                <li><SocialButton><Octicon name="eye" />Watch<Caret /></SocialButton><SocialCount href="#">0</SocialCount></li>
                <li><SocialButton><Octicon name="star" />Star</SocialButton><SocialCount href="#">0</SocialCount></li>
                <li><SocialButton><Octicon name="fork" />Fork</SocialButton><SocialCount href="#">0</SocialCount></li>
              </SocialList>
            </RepoTitleRow>
            <RepoTabs>
              {repoTabs.map(([icon, label, count], i) => (
                <RepoTab key={label} href="#" $active={i === 0}>
                  <Octicon name={icon} />
                  {label}
                  {count && <Counter>{count}</Counter>}
                </RepoTab>
              ))}
            </RepoTabs>
          </RepoHead>

          <Main>
            <DescriptionRow>
              <About>
                <Description><Ko $size={21}>작업문서</Ko></Description>
                <TopicsLink href="#">Add topics</TopicsLink>
              </About>
              <Button>Edit</Button>
            </DescriptionRow>

            <Stats>
              <li><Stat href="#"><Octicon name="history" /><span><strong>11</strong> commits</span></Stat></li>
              <li><Stat href="#"><Octicon name="branch" /><span><strong>1</strong> branch</span></Stat></li>
              <li><Stat href="#"><Octicon name="tag" /><span><strong>0</strong> releases</span></Stat></li>
              <li><Stat href="#"><Octicon name="people" /><span><strong>2</strong> contributors</span></Stat></li>
            </Stats>

            <FileNav>
              <Button><BranchLabel>Branch:</BranchLabel>master<Caret /></Button>
              <Button>New pull request</Button>
              <ButtonGroup>
                <Button>Create new file</Button>
                <Button>Upload files</Button>
                <Button>Find file</Button>
              </ButtonGroup>
              <GreenButton>Clone or download<Caret /></GreenButton>
            </FileNav>

            <FilesBox>
              <CommitTease>
                <Avatar />
                <span><a href="#">justfun1213</a> <Mixed text="Delete 보드구매영수증.png" size={17} /></span>
                <CommitMeta>Latest commit <Sha>f8c8ae9</Sha> an hour ago</CommitMeta>
              </CommitTease>
              <FileTable>
                <tbody>
                  {files.map(([name, message, age]) => (
                    <FileRow key={name} $shaded={name === "README.md"}>
                      <Cell $w="542px"><FileName><Octicon name="file" /><a href="#"><Mixed text={name} size={19} /></a></FileName></Cell>
                      <Cell><Mixed text={message} size={19} /></Cell>
                      <Cell $w="160px" $right>{age}</Cell>
                    </FileRow>
                  ))}
                </tbody>
              </FileTable>
            </FilesBox>

            <Readme>
              <ReadmeHead><Octicon name="book" />README.md</ReadmeHead>
              <ReadmeBody><h1>Plan</h1></ReadmeBody>
            </Readme>
          </Main>
        </Page>
        <Scrollbar>
          <ScrollArrow aria-label="Scroll up"><Caret /></ScrollArrow>
          <ScrollTrack><ScrollThumb /></ScrollTrack>
          <ScrollArrow $down aria-label="Scroll down"><Caret /></ScrollArrow>
        </Scrollbar>
      </Viewport>

      <Taskbar>
        <TaskButton $w={60} aria-label="Start">
          <svg width="20" height="20" viewBox="0 0 20 20" fill="#fff"><path d="M0 2.800L8 1.600V9.500H0zM9 1.500L20 0v9.500H9zM0 10.500h8v7.900L0 17.200zM9 10.500h11V20L9 18.500z" /></svg>
        </TaskButton>
        <TaskButton $w={60} aria-label="Search">
          <svg width="20" height="20" viewBox="0 0 20 20" fill="none" stroke="#fff" strokeWidth="1.400"><circle cx="13" cy="7" r="6.300" /><path d="M8.500 11.500L.5 19.500" /></svg>
        </TaskButton>
        <TaskButton $w={62} aria-label="Task view">
          <svg width="24" height="20" viewBox="0 0 24 20" fill="none" stroke="#fff" strokeWidth="1.200"><path d="M4.500 1.500h15v17h-15zM3 4H.6v12H3M21 4h2.400v12H21" /></svg>
        </TaskButton>
        {taskIcons.map((t) => (
          <TaskButton key={t.name} $w={62} $running={t.running} $stacked={t.stacked} $current={t.current} aria-label={t.name}>
            <TaskIcon>{t.art}</TaskIcon>
          </TaskButton>
        ))}
        <Tray>
          <svg width="18" height="20" viewBox="0 0 18 20" fill="none" stroke="#fff" strokeWidth="1.500"><circle cx="13" cy="4.500" r="3.500" /><circle cx="5.500" cy="10.500" r="3.500" /><path d="M.8 19c0-6 9.400-6 9.400 0M10 9c3-2 7 0 7.300 3.500" /></svg>
          <TrayIcons>
            <svg width="18" height="10" viewBox="0 0 18 10" fill="none" stroke="#fff" strokeWidth="1.400"><path d="M1 9l8-8 8 8" /></svg>
            <svg width="16" height="16" viewBox="0 0 16 16" fill="none" stroke="#ccc" strokeWidth="1.300"><path d="M1 15C1 7 7 1 15 1M4.500 15.500C4.500 9 9 5 15 5M8 15.500C8 12 11 9 15 9" /><circle cx="13.500" cy="14" r="1.500" fill="#fff" stroke="none" /></svg>
            <svg width="19" height="16" viewBox="0 0 19 16" fill="none" stroke="#fff" strokeWidth="1.300"><path d="M1 5h2.500L7 2v12l-3.500-3H1zM11 5l7 7M18 5l-7 7" /></svg>
            <svg width="20" height="12" viewBox="0 0 20 12" fill="none" stroke="#fff" strokeWidth="1.300"><path d="M1 1h16.500v10H1zM19 4v4" /><path d="M3 3h9v6H3z" fill="#fff" stroke="none" /></svg>
            <svg width="18" height="18" viewBox="0 0 18 18"><circle cx="9" cy="9" r="9" fill="#8d8d8d" /><path d="M5 5l8 8M13 5l-8 8" stroke="#111" strokeWidth="2" /></svg>
          </TrayIcons>
          <Clock><Mixed text="오후 2:26" size={16} /><br />2018-01-23</Clock>
          <Notifications aria-label="Notifications">
            <svg width="20" height="20" viewBox="0 0 20 20"><path d="M0 1h20v15H9l-4 4v-4H0z" fill="#fff" /><path d="M4 5.500h12M4 8.500h12M4 11.500h12" stroke="#111" /></svg>
            <NotificationBadge>2</NotificationBadge>
          </Notifications>
        </Tray>
      </Taskbar>
    </Screen>
  );
}
